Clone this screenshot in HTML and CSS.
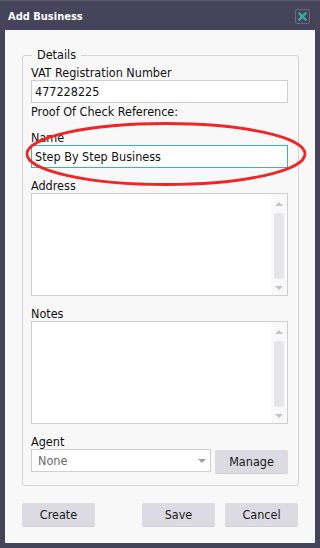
FILE: index.html
```html
<!DOCTYPE html>
<html>
<head>
<meta charset="utf-8">
<link rel="stylesheet" href="styles.css">
</head>
<body>
<div class="dialog">
  <div class="titlebar">
    <span class="title">Add Business</span>
    <span class="close"><svg width="9" height="9" viewBox="0 0 9 9"><path d="M1.5 1.5 L7.5 7.5 M7.5 1.5 L1.5 7.5" stroke="#36aca4" stroke-width="2.4" stroke-linecap="square"/></svg></span>
  </div>
  <div class="panel">
    <fieldset class="details">
      <legend>Details</legend>
      <div class="label">VAT Registration Number</div>
      <div class="input">477228225</div>
      <div class="label proof">Proof Of Check Reference:</div>
      <div class="label name-label">Name</div>
      <div class="input-focused">Step By Step Business</div>
      <div class="label sect">Address</div>
      <div class="textbox">
        <div class="text-area"></div>
        <div class="scroll"><span class="arr up"></span><span class="track"></span><span class="arr down"></span></div>
      </div>
      <div class="label sect">Notes</div>
      <div class="textbox">
        <div class="text-area"></div>
        <div class="scroll"><span class="arr up"></span><span class="track"></span><span class="arr down"></span></div>
      </div>
      <div class="label sect">Agent</div>
      <div class="agent-row">
        <div class="select"><span>None</span><span class="caret"></span></div>
        <button class="btn manage">Manage</button>
      </div>
    </fieldset>
    <div class="actions">
      <button class="btn">Create</button>
      <div class="right">
        <button class="btn">Save</button>
        <button class="btn">Cancel</button>
      </div>
    </div>
    <svg class="circle" width="284" height="66" viewBox="0 0 284 66"><ellipse cx="141" cy="32" rx="139" ry="30.5" fill="none" stroke="#f02626" stroke-width="2.8"/></svg>
  </div>
</div>
</body>
</html>
```
FILE: styles.css
```css
html, body {
  margin: 0;
  padding: 0;
  background: #46445a;
  width: 320px;
  height: 548px;
  overflow: hidden;
}
body {
  font-family: "DejaVu Sans Condensed", "DejaVu Sans", sans-serif;
  font-size: 12.5px;
  color: #111;
}
.dialog {
  width: 320px;
  height: 548px;
  border-top: 1px solid #5c5a6e;
  box-sizing: border-box;
}
.titlebar {
  height: 29px;
  display: flex;
  align-items: center;
  justify-content: space-between;
  padding: 0 10px 0 8px;
}
.title {
  color: #fff;
  font-weight: bold;
  font-size: 11px;
  margin-top: 1px;
}
.close {
  width: 13px;
  height: 13px;
  border: 1px solid #6b697f;
  border-radius: 2px;
  display: flex;
  align-items: center;
  justify-content: center;
  margin-top: 1px;
}
.panel {
  position: relative;
  margin: 0 5px;
  height: 513px;
  background: #f8f8f8;
  box-sizing: border-box;
  padding-top: 18px;
}
.details {
  margin: 0 16px 0 17px;
  padding: 3px 10px 12px 8px;
  border: 1px solid #d4d4d4;
  border-radius: 3px;
  display: flex;
  flex-direction: column;
  min-width: 0;
}
.details legend {
  padding: 0 5px;
  margin-left: 1px;
  line-height: 14px;
  font-size: 12.5px;
}
.label {
  line-height: 15px;
  height: 15px;
  white-space: nowrap;
}
.proof { margin-top: 1px; }
.name-label { margin-top: 11px; }
.sect { margin-top: 10px; }
.input, .input-focused {
  height: 23px;
  box-sizing: border-box;
  border: 1px solid #cfcfcf;
  background: #fff;
  line-height: 21px;
  padding-left: 3px;
  white-space: nowrap;
}
.input-focused {
  border: 1px solid #40b2a8;
  width: 257px;
}
.textbox {
  height: 103px;
  box-sizing: border-box;
  border: 1px solid #cfcfcf;
  background: #fff;
  display: flex;
}
.text-area { flex: 1; }
.scroll {
  width: 16px;
  background: #f9f9f9;
  display: flex;
  flex-direction: column;
  align-items: center;
  padding-top: 8px;
  box-sizing: border-box;
}
.arr {
  width: 0;
  height: 0;
  border-left: 4px solid transparent;
  border-right: 4px solid transparent;
}
.arr.up { border-bottom: 4px solid #c4c4c8; }
.arr.down { border-top: 4px solid #c4c4c8; margin-top: 7px; }
.track {
  width: 10px;
  height: 66px;
  margin-top: 7px;
  background: #e6e6e8;
  border-radius: 3px;
}
.agent-row {
  display: flex;
  gap: 4px;
  align-items: flex-start;
}
.select {
  width: 180px;
  height: 23px;
  box-sizing: border-box;
  border: 1px solid #cfcfcf;
  background: #fff;
  display: flex;
  align-items: center;
  justify-content: space-between;
  padding: 0 4px 0 6px;
  color: #6a6a6a;
}
.caret {
  width: 0;
  height: 0;
  border-left: 4px solid transparent;
  border-right: 4px solid transparent;
  border-top: 4px solid #a0a0a4;
}
.btn {
  font-family: inherit;
  font-size: 12.5px;
  color: #1a1a1a;
  width: 73px;
  height: 23px;
  border: none;
  border-radius: 2px;
  background: #dcdbe3;
  box-shadow: 0 1px 0 #cfced6;
  padding: 0;
  margin: 0;
}
.manage {
  margin-top: 1px;
}
.actions {
  display: flex;
  justify-content: space-between;
  margin: 17px 17px 0 17px;
}
.right {
  display: flex;
  gap: 10px;
}
.circle {
  position: absolute;
  left: 20px;
  top: 92px;
}
```
